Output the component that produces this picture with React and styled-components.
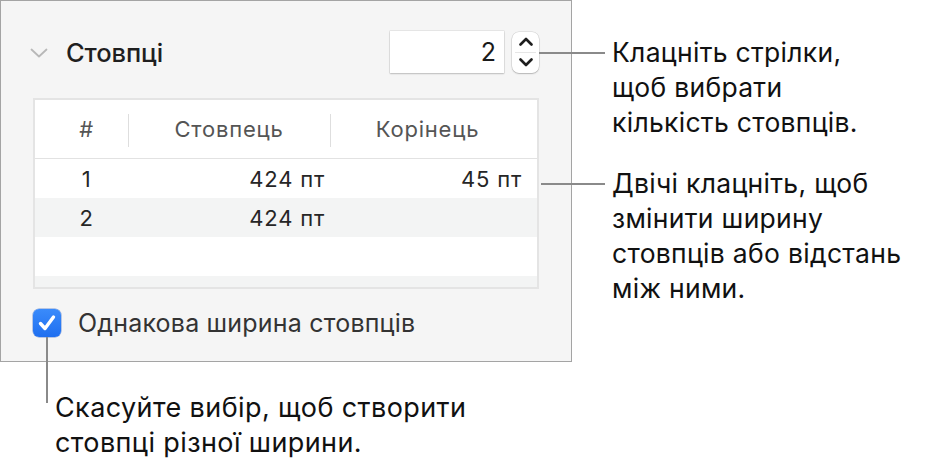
import React from "react";
import styled, { createGlobalStyle } from "styled-components";

const Global = createGlobalStyle`
  html, body { margin: 0; padding: 0; background: #ffffff; }
  body { font-family: Inter, "Noto Sans", "Liberation Sans", sans-serif; -webkit-font-smoothing: antialiased; }
  #root { width: 926px; height: 463px; overflow: hidden; }
`;

const Page = styled.div`
  display: grid;
  grid-template-columns: 572px 354px;
  grid-template-rows: 362px 101px;
  width: 926px;
  height: 463px;
`;

const Panel = styled.section`
  box-sizing: border-box;
  background: #f5f5f5;
  border: 1px solid #a4a4a4;
  padding: 30px 32px 0 32px;
  display: flex;
  flex-direction: column;
`;

const HeaderRow = styled.div`
  display: flex;
  align-items: center;
  height: 42px;
`;

const Disclosure = styled.svg`
  width: 18px;
  height: 10px;
  margin-left: -3px;
  margin-right: 18px;
  margin-top: 1px;
`;

const Title = styled.h2`
  margin: 0;
  flex: 1;
  font-size: 25.5px;
  font-weight: 500;
  color: #1f1f1f;
  letter-spacing: -0.1px;
`;

const NumberField = styled.div`
  box-sizing: border-box;
  width: 114px;
  height: 42px;
  background: #ffffff;
  box-shadow: 0 0 0 0.5px rgba(0,0,0,0.12), 0 1px 1.5px rgba(0,0,0,0.18);
  display: flex;
  align-items: center;
  justify-content: flex-end;
  padding-right: 8px;
  font-size: 25px;
  color: #1a1a1a;
`;

const Stepper = styled.div`
  position: relative;
  box-sizing: border-box;
  width: 27px;
  height: 41px;
  margin-left: 8px;
  border-radius: 7px;
  background: #ffffff;
  box-shadow: 0 0 0 0.5px rgba(0,0,0,0.14), 0 1px 1.5px rgba(0,0,0,0.2);
  display: flex;
  flex-direction: column;
  align-items: center;
  justify-content: space-between;
  padding: 5px 0 6px;
  &::after {
    content: "";
    position: absolute;
    left: 3px;
    right: 3px;
    top: 20px;
    height: 1px;
    background: #e6e6e6;
  }
`;

const StepIcon = styled.svg`
  width: 16px;
  height: 9px;
`;

const Table = styled.div`
  box-sizing: border-box;
  margin-top: 25px;
  width: 506px;
  height: 191px;
  border: 2px solid #e4e4e4;
  background: #ffffff;
  display: flex;
  flex-direction: column;
  overflow: hidden;
`;

const Row = styled.div`
  display: grid;
  grid-template-columns: 93px 202px 195px;
  align-items: center;
  flex: none;
  height: ${p => p.$h}px;
  background: ${p => (p.$alt ? "#f3f4f4" : "#ffffff")};
  border-bottom: ${p => (p.$head ? "1px solid #e2e2e2" : "none")};
`;

const HeadCell = styled.div`
  position: relative;
  text-align: center;
  font-size: 22px;
  letter-spacing: 0.8px;
  color: #555555;
  padding-left: ${p => p.$pl || 0}px;
  &::before {
    content: "";
    display: ${p => (p.$sep ? "block" : "none")};
    position: absolute;
    left: 0;
    top: -2px;
    bottom: -5px;
    width: 1px;
    background: #dedede;
  }
`;

const Cell = styled.div`
  font-size: 22px;
  letter-spacing: 0.8px;
  color: #262626;
  text-align: ${p => p.$align || "right"};
  padding-left: ${p => p.$pl || 0}px;
  padding-right: ${p => p.$pr || 0}px;
`;

const CheckRow = styled.label`
  display: flex;
  align-items: center;
  margin-top: 19px;
  gap: 17px;
`;

const CheckBox = styled.span`
  box-sizing: border-box;
  width: 28px;
  height: 28px;
  border-radius: 6px;
  background: linear-gradient(#3a8bfb, #1f6ff0);
  box-shadow: 0 0 0 0.5px rgba(0,60,180,0.5);
  display: flex;
  align-items: center;
  justify-content: center;
`;

const CheckLabel = styled.span`
  font-size: 25px;
  letter-spacing: 0.2px;
  color: #333333;
`;

const SideNotes = styled.div`
  padding-left: 40px;
  padding-top: 35px;
  display: flex;
  flex-direction: column;
  gap: 26px;
`;

const Note = styled.p`
  position: relative;
  margin: 0;
  font-size: 26.5px;
  letter-spacing: 0.3px;
  line-height: 35px;
  color: #111111;
  &::before {
    content: "";
    position: absolute;
    top: 17px;
    left: ${p => -p.$lead}px;
    width: ${p => p.$lead - 7}px;
    height: 1.5px;
    background: #8a8a8a;
  }
`;

const BottomNote = styled.p`
  grid-column: 1 / span 2;
  position: relative;
  margin: 0;
  padding: 28px 0 0 55px;
  font-size: 27px;
  letter-spacing: 0.4px;
  line-height: 35px;
  color: #111111;
  &::before {
    content: "";
    position: absolute;
    left: 46px;
    top: -25px;
    width: 1.5px;
    height: 66px;
    background: #8a8a8a;
  }
`;

export default function App() {
  return (
    <>
      <Global />
      <Page>
        <Panel>
          <HeaderRow>
            <Disclosure viewBox="0 0 18 10">
              <path d="M1.5 1.5 L9 8.5 L16.5 1.5" fill="none" stroke="#b8b8b8" strokeWidth="1.8" strokeLinecap="round" strokeLinejoin="round" />
            </Disclosure>
            <Title>Стовпці</Title>
            <NumberField>2</NumberField>
            <Stepper>
              <StepIcon viewBox="0 0 16 9">
                <path d="M2.5 7.5 L8 2 L13.5 7.5" fill="none" stroke="#1e1e1e" strokeWidth="2.6" strokeLinecap="round" strokeLinejoin="round" />
              </StepIcon>
              <StepIcon viewBox="0 0 16 9">
                <path d="M2.5 1.5 L8 7 L13.5 1.5" fill="none" stroke="#1e1e1e" strokeWidth="2.6" strokeLinecap="round" strokeLinejoin="round" />
              </StepIcon>
            </Stepper>
          </HeaderRow>
          <Table>
            <Row $head $h={58}>
              <HeadCell $pl={10}>#</HeadCell>
              <HeadCell $sep>Стовпець</HeadCell>
              <HeadCell $sep>Корінець</HeadCell>
            </Row>
            <Row $h={39}>
              <Cell $align="center" $pl={10}>1</Cell>
              <Cell $pr={5}>424 пт</Cell>
              <Cell $pr={3}>45 пт</Cell>
            </Row>
            <Row $alt $h={39}>
              <Cell $align="center" $pl={10}>2</Cell>
              <Cell $pr={5}>424 пт</Cell>
              <Cell />
            </Row>
            <Row $h={39} />
            <Row $alt $h={39} />
          </Table>
          <CheckRow>
            <CheckBox>
              <svg width="20" height="18" viewBox="0 0 20 18">
                <path d="M3.5 9.5 L8 14.5 L16.5 3" fill="none" stroke="#fff" strokeWidth="3.4" strokeLinecap="round" strokeLinejoin="round" />
              </svg>
            </CheckBox>
            <CheckLabel>Однакова ширина стовпців</CheckLabel>
          </CheckRow>
        </Panel>
        <SideNotes>
          <Note $lead={73}>Клацніть стрілки,<br />щоб вибрати<br />кількість стовпців.</Note>
          <Note $lead={71}>Двічі клацніть, щоб<br />змінити ширину<br />стовпців або відстань<br />між ними.</Note>
        </SideNotes>
        <BottomNote>Скасуйте вибір, щоб створити<br />стовпці різної ширини.</BottomNote>
      </Page>
    </>
  );
}
